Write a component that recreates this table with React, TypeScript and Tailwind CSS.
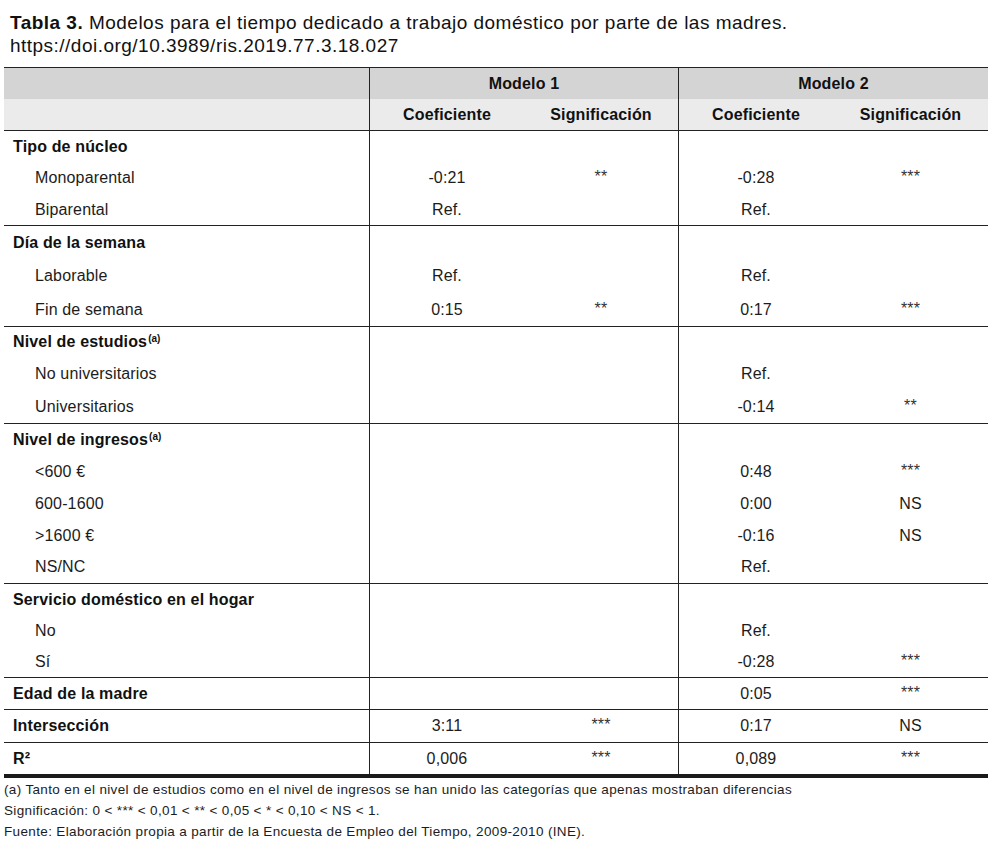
import React from "react";

type Row = {
  label: React.ReactNode;
  head?: boolean;
  h: string;
  c1?: string;
  s1?: string;
  c2?: string;
  s2?: string;
};

const sup = (t: string) => (
  <span className="relative -top-[5px] ml-[1px] text-[10px] font-bold leading-none tracking-normal">{t}</span>
);

const groups: Row[][] = [
  [
    { label: "Tipo de núcleo", head: true, h: "h-[31px]" },
    { label: "Monoparental", h: "h-[32px]", c1: "-0:21", s1: "**", c2: "-0:28", s2: "***" },
    { label: "Biparental", h: "h-[31px]", c1: "Ref.", c2: "Ref." },
  ],
  [
    { label: "Día de la semana", head: true, h: "h-[33px]" },
    { label: "Laborable", h: "h-[34px]", c1: "Ref.", c2: "Ref." },
    { label: "Fin de semana", h: "h-[33px]", c1: "0:15", s1: "**", c2: "0:17", s2: "***" },
  ],
  [
    { label: <>Nivel de estudios{sup("(a)")}</>, head: true, h: "h-[30px]" },
    { label: "No universitarios", h: "h-[33px]", c2: "Ref." },
    { label: "Universitarios", h: "h-[33px]", c2: "-0:14", s2: "**" },
  ],
  [
    { label: <>Nivel de ingresos{sup("(a)")}</>, head: true, h: "h-[32px]" },
    { label: "<600 €", h: "h-[32px]", c2: "0:48", s2: "***" },
    { label: "600-1600", h: "h-[32px]", c2: "0:00", s2: "NS" },
    { label: ">1600 €", h: "h-[31px]", c2: "-0:16", s2: "NS" },
    { label: "NS/NC", h: "h-[32px]", c2: "Ref." },
  ],
  [
    { label: "Servicio doméstico en el hogar", head: true, h: "h-[31px]" },
    { label: "No", h: "h-[31px]", c2: "Ref." },
    { label: "Sí", h: "h-[31px]", c2: "-0:28", s2: "***" },
  ],
  [{ label: "Edad de la madre", head: true, h: "h-[31px]", c2: "0:05", s2: "***" }],
  [{ label: "Intersección", head: true, h: "h-[32px]", c1: "3:11", s1: "***", c2: "0:17", s2: "NS" }],
  [{ label: <>R²</>, head: true, h: "h-[31px]", c1: "0,006", s1: "***", c2: "0,089", s2: "***" }],
];

const grid = "grid grid-cols-[365px_155px_154px_155px_155px]";

function Cell({ v, left }: { v?: string; left?: boolean }) {
  const star = v?.startsWith("*");
  return (
    <div className={`flex items-center justify-center ${left ? "border-l border-[#222]" : ""}`}>
      <span className={star ? "relative -top-[1px] text-[#333]" : ""}>{v}</span>
    </div>
  );
}

export default function App() {
  return (
    <div
      className="w-[994px] h-[850px] bg-white text-[#1c1c1c]"
      style={{ fontFamily: '"Liberation Sans", Arial, sans-serif' }}
    >
      <div className="pl-[10px] pt-[11px] text-[19px] leading-[23px] tracking-[0.48px] text-[#111]">
        <div>
          <span className="font-bold">Tabla 3.</span> Modelos para el tiempo dedicado a trabajo doméstico por parte de
          las madres.
        </div>
        <div>https://doi.org/10.3989/ris.2019.77.3.18.027</div>
      </div>

      <div className="ml-[4px] mt-[10px] w-[984px] border-t border-[#222] text-[16px] tracking-[0.15px]">
        {/* header */}
        <div className={`${grid} h-[31px] bg-[#d4d4d4] font-bold text-[#111]`}>
          <div />
          <div className="col-span-2 flex items-center justify-center border-l border-[#222]">Modelo 1</div>
          <div className="col-span-2 flex items-center justify-center border-l border-[#222]">Modelo 2</div>
        </div>
        <div className={`${grid} h-[32px] border-b border-[#222] bg-[#ebebeb] font-bold text-[#111]`}>
          <div />
          <div className="flex items-center justify-center border-l border-[#222]">Coeficiente</div>
          <div className="flex items-center justify-center">Significación</div>
          <div className="flex items-center justify-center border-l border-[#222]">Coeficiente</div>
          <div className="flex items-center justify-center">Significación</div>
        </div>

        {groups.map((g, gi) => (
          <div
            key={gi}
            className={gi === groups.length - 1 ? "border-b-4 border-[#1a1a1a]" : "border-b border-[#222]"}
          >
            {g.map((r, ri) => (
              <div key={ri} className={`${grid} ${r.h}`}>
                <div
                  className={`flex items-center ${r.head ? "pl-[9px] font-bold text-[#111]" : "pl-[31px]"}`}
                >
                  <span>{r.label}</span>
                </div>
                <Cell v={r.c1} left />
                <Cell v={r.s1} />
                <Cell v={r.c2} left />
                <Cell v={r.s2} />
              </div>
            ))}
          </div>
        ))}
      </div>

      <div className="pl-[4px] pt-[1px] text-[13.5px] leading-[21px] tracking-[0.35px] text-[#1c1c1c]">
        <div>(a) Tanto en el nivel de estudios como en el nivel de ingresos se han unido las categorías que apenas mostraban diferencias</div>
        <div>Significación: 0 &lt; *** &lt; 0,01 &lt; ** &lt; 0,05 &lt; * &lt; 0,10 &lt; NS &lt; 1.</div>
        <div>Fuente: Elaboración propia a partir de la Encuesta de Empleo del Tiempo, 2009-2010 (INE).</div>
      </div>
    </div>
  );
}
